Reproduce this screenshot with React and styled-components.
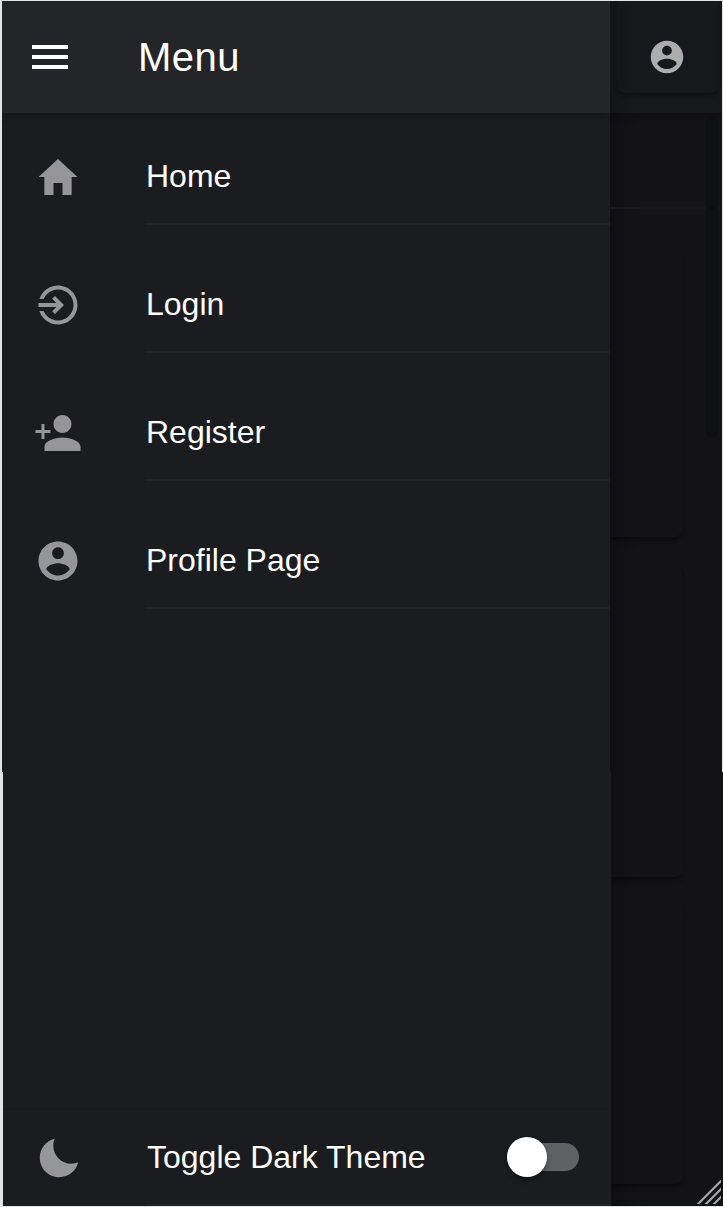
import React from "react";
import styled, { createGlobalStyle } from "styled-components";
import { IoMdMenu, IoMdHome, IoMdLogIn, IoMdPersonAdd, IoMdContact, IoMdMoon } from "react-icons/io";

const GlobalStyle = createGlobalStyle`
  * { box-sizing: border-box; }
  body {
    margin: 0;
    background: #e0e4e4;
    font-family: "Liberation Sans", Arial, sans-serif;
    color: #fff;
  }
`;

const Page = styled.div`
  display: flex;
  flex-direction: column;
  height: 1207px;
  overflow: hidden;
`;

const Band = styled.section`
  display: flex;
  flex: none;
  height: ${(p) => p.$height}px;
  margin: ${(p) => p.$margin};
  overflow: hidden;
`;

const Drawer = styled.nav`
  display: flex;
  flex-direction: column;
  flex: none;
  width: 608px;
  background: #1b1c1f;
`;

const DrawerHeader = styled.header`
  display: flex;
  align-items: center;
  flex: none;
  height: 112px;
  padding-left: 24px;
  background: #242528;
  box-shadow: 0 2px 8px rgba(0, 0, 0, 0.3);
`;

const MenuButton = styled.button`
  display: flex;
  padding: 0;
  border: 0;
  background: none;
  color: #fff;
`;

const Title = styled.h1`
  margin: 0 0 0 64px;
  font-size: 40px;
  font-weight: 400;
  line-height: 48px;
  letter-spacing: 0.5px;
`;

const List = styled.ul`
  display: flex;
  flex-direction: column;
  gap: 32px;
  margin: 0;
  padding: 16px 0 0;
  list-style: none;
`;

const Item = styled.li`
  display: flex;
  align-items: center;
  height: 96px;
  padding-left: 32px;
  color: #969698;
`;

const ItemLabel = styled.span`
  display: flex;
  align-items: center;
  flex: 1;
  height: 96px;
  margin-left: 64px;
  padding-bottom: 1px;
  border-bottom: 2px solid #222323;
  color: #fff;
  font-size: 32px;
  line-height: 38px;
`;

const DrawerFooter = styled.footer`
  margin-top: auto;
  border-top: 2px solid #191a1c;
`;

const Switch = styled.span`
  display: flex;
  align-items: center;
  width: 72px;
  height: 28px;
  margin-left: auto;
  margin-right: 32px;
  border-radius: 14px;
  background: #606163;
`;

const Thumb = styled.span`
  width: 40px;
  height: 40px;
  border-radius: 50%;
  background: #fff;
  box-shadow: 0 4px 4px -2px rgba(0, 0, 0, 0.25), 0 2px 6px rgba(0, 0, 0, 0.25);
`;

const Backdrop = styled.main`
  display: flex;
  flex-direction: column;
  flex: 1;
  min-width: 0;
  overflow: hidden;
  background: linear-gradient(90deg, #0f0f11 0, #111113 14px, #131315 30px);
`;

const TopBar = styled.header`
  flex: none;
  height: 112px;
  padding: 0 4px 20px 7px;
  background: linear-gradient(90deg, #131417 0, #17181b 26px);
  box-shadow: 0 2px 6px rgba(0, 0, 0, 0.35);
`;

const ProfileButton = styled.button`
  display: flex;
  align-items: center;
  justify-content: center;
  width: 101px;
  height: 92px;
  padding: 19px 1px 0 0;
  border: 0;
  border-radius: 0 0 7px 7px;
  background: transparent;
  box-shadow: 0 4px 4px -2px rgba(0, 0, 0, 0.35), 0 1px 4px rgba(0, 0, 0, 0.12);
  color: #adadad;
`;

const Content = styled.div`
  display: flex;
  justify-content: space-between;
  flex: 1;
  min-height: 0;
`;

const Feed = styled.div`
  flex: 1;
`;

const Subheader = styled.div`
  height: 96px;
  margin-right: -16px;
  border-bottom: 2px solid #17181a;
`;

const Card = styled.article`
  flex: none;
  width: 72px;
  height: ${(p) => p.$height}px;
  margin-top: ${(p) => p.$gap}px;
  border-radius: ${(p) => (p.$continued ? "0 0 8px 0" : "0 8px 8px 0")};
  box-shadow: 0 4px 4px -2px rgba(0, 0, 0, 0.4), 0 5px 5px rgba(0, 0, 0, 0.1);
`;

const ScrollThumb = styled.div`
  width: 12px;
  height: 320px;
  margin: 4px 4px 0 0;
  border-radius: 6px;
  background: #0e0f11;
`;

const GripRow = styled.div`
  display: flex;
  flex: none;
  justify-content: flex-end;
  margin-top: -4px;
  padding: 0 2px 2px 0;
`;

const entries = [
  { label: "Home", Icon: IoMdHome },
  { label: "Login", Icon: IoMdLogIn },
  { label: "Register", Icon: IoMdPersonAdd },
  { label: "Profile Page", Icon: IoMdContact },
];

function MenuItem({ label, Icon }) {
  return (
    <Item>
      <Icon size={48} />
      <ItemLabel>{label}</ItemLabel>
    </Item>
  );
}

export default function App() {
  return (
    <Page>
      <GlobalStyle />
      <Band $height={771} $margin="1px 1px 0 2px">
        <Drawer>
          <DrawerHeader>
            <MenuButton aria-label="Close menu"><IoMdMenu size={48} /></MenuButton>
            <Title>Menu</Title>
          </DrawerHeader>
          <List>
            {entries.map((e) => <MenuItem key={e.label} {...e} />)}
          </List>
        </Drawer>
        <Backdrop>
          <TopBar>
            <ProfileButton aria-label="Profile"><IoMdContact size={40} /></ProfileButton>
          </TopBar>
          <Content>
            <Feed>
              <Subheader />
              <Card $height={288} $gap={40} />
              <Card $height={400} $gap={28} />
            </Feed>
            <ScrollThumb />
          </Content>
        </Backdrop>
      </Band>
      <Band $height={434} $margin="0 0 1px 3px">
        <Drawer>
          <DrawerFooter>
            <Item as="div">
              <IoMdMoon size={48} />
              <ItemLabel>
                Toggle Dark Theme
                <Switch role="switch" aria-checked="false"><Thumb /></Switch>
              </ItemLabel>
            </Item>
          </DrawerFooter>
        </Drawer>
        <Backdrop>
          <Card $height={105} $gap={0} $continued />
          <Card $height={279} $gap={28} />
          <GripRow>
            <svg width="24" height="24" viewBox="0 0 24 24" fill="none" stroke="#a8a8a8" strokeWidth="2.2">
              <path d="M0 25L25 0M8 25L25 8M16 25L25 16" />
            </svg>
          </GripRow>
        </Backdrop>
      </Band>
    </Page>
  );
}
